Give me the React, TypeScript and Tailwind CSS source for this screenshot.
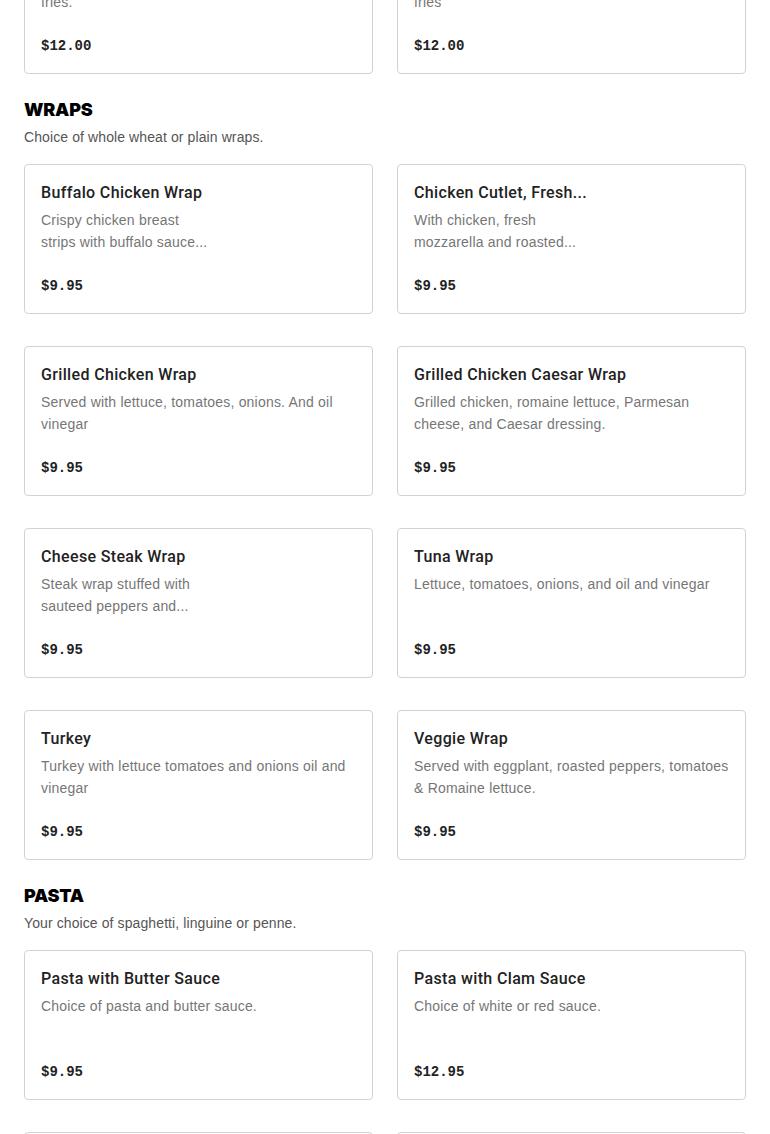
import React from 'react';

type Item = { name: string; desc: string; price: string; narrow?: boolean };
type Section = { title: string; note: string; items: Item[] };

const sections: Section[] = [
    {
        title: 'WRAPS',
        note: 'Choice of whole wheat or plain wraps.',
        items: [
            { name: 'Buffalo Chicken Wrap', desc: 'Crispy chicken breast strips with buffalo sauce...', price: '$9.95', narrow: true },
            { name: 'Chicken Cutlet, Fresh...', desc: 'With chicken, fresh mozzarella and roasted...', price: '$9.95', narrow: true },
            { name: 'Grilled Chicken Wrap', desc: 'Served with lettuce, tomatoes, onions. And oil vinegar', price: '$9.95' },
            { name: 'Grilled Chicken Caesar Wrap', desc: 'Grilled chicken, romaine lettuce, Parmesan cheese, and Caesar dressing.', price: '$9.95' },
            { name: 'Cheese Steak Wrap', desc: 'Steak wrap stuffed with sauteed peppers and...', price: '$9.95', narrow: true },
            { name: 'Tuna Wrap', desc: 'Lettuce, tomatoes, onions, and oil and vinegar', price: '$9.95' },
            { name: 'Turkey', desc: 'Turkey with lettuce tomatoes and onions oil and vinegar', price: '$9.95' },
            { name: 'Veggie Wrap', desc: 'Served with eggplant, roasted peppers, tomatoes & Romaine lettuce.', price: '$9.95' },
        ],
    },
    {
        title: 'PASTA',
        note: 'Your choice of spaghetti, linguine or penne.',
        items: [
            { name: 'Pasta with Butter Sauce', desc: 'Choice of pasta and butter sauce.', price: '$9.95' },
            { name: 'Pasta with Clam Sauce', desc: 'Choice of white or red sauce.', price: '$12.95' },
            { name: 'Pasta with Marinara Sauce', desc: 'Choice of pasta and marinara sauce.', price: '$9.95' },
            { name: 'Pasta with Meat Sauce', desc: 'Choice of pasta and meat sauce.', price: '$11.95' },
        ],
    },
];

const Card: React.FC<{ item: Item; children?: React.ReactNode }> = ({ item, children }) => (
    <div className="h-[150px] bg-white border border-[#d2d2d2] rounded-[4px] px-4 pt-4 pb-4 flex flex-col">
        <h4 className={`font-['Roboto',sans-serif] text-[16px] leading-6 font-medium text-[#222] tracking-[0.35px] truncate ${item.narrow ? 'max-w-[174px]' : ''}`}>{item.name}</h4>
        <p className={`mt-1 text-[14px] leading-[22px] text-[#767676] tracking-[0.2px] line-clamp-2 ${item.narrow ? 'max-w-[172px]' : ''}`}>
            {children ?? item.desc}
        </p>
        <span className="mt-auto font-['Liberation_Mono',monospace] font-bold text-[14px] leading-[22px] text-[#222]">{item.price}</span>
    </div>
);

const App: React.FC = () => {
    return (
        <div className="bg-white font-['Liberation_Sans',Arial,sans-serif] px-6 overflow-hidden h-[1134px]">
            <div className="grid grid-cols-2 gap-x-6 mt-[-76px]">
                <Card item={{ name: 'Chicken Fingers Basket', desc: '', price: '$12.00' }}>
                    Crispy chicken fingers served with french<br />fries.
                </Card>
                <Card item={{ name: 'Fish and Chips Basket', desc: '', price: '$12.00' }}>
                    Fried fillet of fish served with french<br />fries
                </Card>
            </div>

            {sections.map(s => (
                <section key={s.title} className="pt-6">
                    <h2 className="font-['Inter',sans-serif] font-black text-[18px] leading-6 text-black tracking-[-0.2px]">{s.title}</h2>
                    <p className="mt-1 text-[14px] leading-[22px] text-[#555] tracking-[0.1px]">{s.note}</p>
                    <div className="grid grid-cols-2 gap-x-6 gap-y-8 mt-4">
                        {s.items.map(it => <Card key={it.name} item={it} />)}
                    </div>
                </section>
            ))}
        </div>
    );
};

export default App;
